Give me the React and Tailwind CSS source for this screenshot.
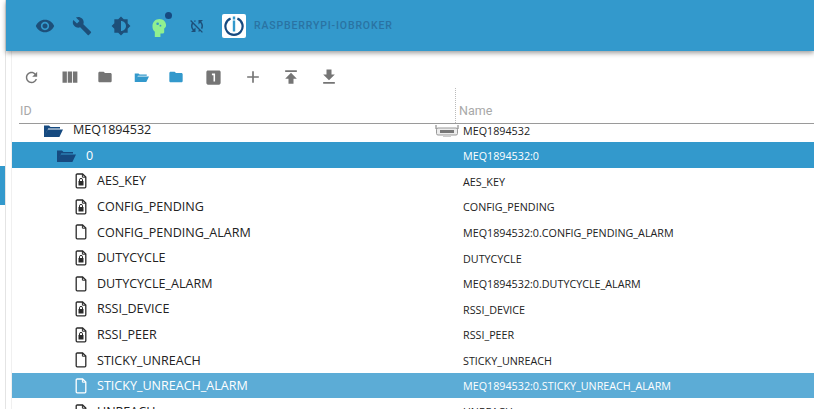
const D = "#1d4f79";
const G = "#757575";
const B = "#3399cc";

function Mi({ d, size = 24, color, className = "" }) {
  return (
    <svg width={size} height={size} viewBox="0 0 24 24" fill={color} className={"shrink-0 " + className}>
      <path d={d} />
    </svg>
  );
}

const P = {
  eye: "M12 4.5C7 4.5 2.73 7.61 1 12c1.73 4.39 6 7.5 11 7.5s9.27-3.11 11-7.5c-1.73-4.39-6-7.5-11-7.5zM12 17c-2.76 0-5-2.24-5-5s2.24-5 5-5 5 2.24 5 5-2.24 5-5 5zm0-8c-1.66 0-3 1.34-3 3s1.34 3 3 3 3-1.34 3-3-1.34-3-3-3z",
  wrench: "M22.7 19l-9.1-9.1c.9-2.3.4-5-1.5-6.9-2-2-5-2.4-7.4-1.3L9 6 6 9 1.6 4.7C.4 7.1.9 10.1 2.9 12.1c1.9 1.9 4.6 2.4 6.9 1.5l9.1 9.1c.4.4 1 .4 1.4 0l2.3-2.3c.5-.4.5-1.1.1-1.4z",
  bright: "M20 8.69V4h-4.69L12 .69 8.69 4H4v4.69L.69 12 4 15.31V20h4.69L12 23.31 15.31 20H20v-4.69L23.31 12 20 8.69zM12 18V6c3.31 0 6 2.69 6 6s-2.69 6-6 6z",
  sync: "M10 6.35V4.26c-.8.21-1.55.54-2.23.96l1.46 1.46c.25-.12.5-.24.77-.33zm-7.14-.94l2.36 2.36C4.45 8.99 4 10.44 4 12c0 2.21.91 4.2 2.36 5.64L4 20h6v-6l-2.24 2.24C6.68 15.15 6 13.66 6 12c0-1 .25-1.94.68-2.77l8.08 8.08c-.25.13-.5.25-.77.34v2.09c.8-.21 1.55-.54 2.23-.96l2.36 2.36 1.27-1.27L4.14 4.14 2.86 5.41zM20 4h-6v6l2.24-2.24C17.32 8.85 18 10.34 18 12c0 1-.25 1.94-.68 2.77l1.46 1.46C19.55 15.01 20 13.56 20 12c0-2.21-.91-4.2-2.36-5.64L20 4z",
  refresh: "M17.65 6.35C16.2 4.9 14.21 4 12 4c-4.42 0-7.99 3.58-7.99 8s3.57 8 7.99 8c3.73 0 6.84-2.55 7.73-6h-2.08c-.82 2.33-3.04 4-5.65 4-3.31 0-6-2.69-6-6s2.69-6 6-6c1.66 0 3.14.69 4.22 1.78L13 11h7V4l-2.35 2.35z",
  cols: "M10 18h5V5h-5v13zm-6 0h5V5H4v13zM16 5v13h5V5h-5z",
  folder: "M10 4H4c-1.1 0-1.99.9-1.99 2L2 18c0 1.1.9 2 2 2h16c1.1 0 2-.9 2-2V8c0-1.1-.9-2-2-2h-8l-2-2z",
  one: "M19 3H5c-1.1 0-2 .9-2 2v14c0 1.1.9 2 2 2h14c1.1 0 2-.9 2-2V5c0-1.1-.9-2-2-2zm-5 14h-2V9h-2V7h4v10z",
  plus: "M19 13h-6v6h-2v-6H5v-2h6V5h2v6h6v2z",
  up: "M5 4v2h14V4H5zm0 10h4v6h6v-6h4l-7-7-7 7z",
  down: "M19 9h-4V3H9v6H5l7 7 7-7zM5 18v2h14v-2H5z",
};

function FolderOpen({ color, w = 20, h = 14 }) {
  return (
    <svg width={w} height={h} viewBox="0 0 20 14" fill={color} className="shrink-0">
      <path d="M1 13V1.5h5l1.5 1.5H17v1.6H5.2L1.8 11.4 4.8 5.6H20L16.4 13z" />
    </svg>
  );
}

function FileIcon({ locked, color }) {
  return (
    <svg width="12" height="16" viewBox="0 0 12 16" className="shrink-0 -mt-[1px]">
      <path d="M1.2 3v10.8c0 .6.4 1 1 1h7.6c.6 0 1-.4 1-1V4L7.6 1H2.2c-.6 0-1 .4-1 1z" fill="none" stroke={color} strokeWidth="1.3" />
      <path d="M7.4 1v3.2h3.4" fill="none" stroke={color} strokeWidth="1" />
      {locked && <rect x="3.5" y="8" width="5" height="4.6" rx=".4" fill={color} />}
      {locked && <path d="M4.5 8.2V6.9a1.5 1.5 0 013 0v1.3" fill="none" stroke={color} strokeWidth="1" />}
    </svg>
  );
}

function Device() {
  return (
    <svg width="24" height="14" viewBox="0 0 24 14" className="shrink-0">
      <path d="M1 1v4h22V1" fill="none" stroke="#777" strokeWidth="1" />
      <rect x="1.5" y="4" width="21" height="7" rx="1.5" fill="#ececec" stroke="#999" />
      <rect x="5" y="6" width="14" height="3" fill="#777" />
      <rect x="8" y="11" width="8" height="2" fill="#ccc" />
    </svg>
  );
}

const rows = [
  { id: "AES_KEY", name: "AES_KEY", locked: true },
  { id: "CONFIG_PENDING", name: "CONFIG_PENDING", locked: true },
  { id: "CONFIG_PENDING_ALARM", name: "MEQ1894532:0.CONFIG_PENDING_ALARM" },
  { id: "DUTYCYCLE", name: "DUTYCYCLE", locked: true },
  { id: "DUTYCYCLE_ALARM", name: "MEQ1894532:0.DUTYCYCLE_ALARM" },
  { id: "RSSI_DEVICE", name: "RSSI_DEVICE", locked: true },
  { id: "RSSI_PEER", name: "RSSI_PEER", locked: true },
  { id: "STICKY_UNREACH", name: "STICKY_UNREACH" },
  { id: "STICKY_UNREACH_ALARM", name: "MEQ1894532:0.STICKY_UNREACH_ALARM", hl: true },
  { id: "UNREACH", name: "UNREACH", locked: true },
];

export default function App() {
  return (
    <div className="w-[814px] h-[409px] overflow-hidden bg-white flex font-['Open_Sans',sans-serif] text-[#222]">
      <div className="w-[6px] shrink-0 border-r border-[#e4e4e4] pt-[166px]">
        <div className="w-[5px] h-[39px] bg-[#3399cc]" />
      </div>
      <div className="flex-1 min-w-0 flex flex-col">
        <header className="relative z-10 h-[51px] shrink-0 bg-[#3399cc] shadow-[0_2px_5px_rgba(0,0,0,0.4)] flex items-center pl-[28.5px] pt-[1px]">
          <Mi d={P.eye} size={20} color={D} />
          <Mi d={P.wrench} size={20} color={D} className="ml-[17.5px]" />
          <Mi d={P.bright} size={20} color={D} className="ml-[19px]" />
          <div className="relative ml-[21px] w-[20px] h-[24px]">
            <svg width="15" height="19" viewBox="0 0 16 20" className="mt-[4px]">
              <path d="M3 20v-5.5C1 13 .5 11 .5 8.5.5 4 3.8 1 8 1c4 0 7 3 7 6.5 0 1.5-.5 2.5-2 3.5v4c0 1-1 1.5-2 1.5H9V20z" fill="#90f090" />
              <circle cx="6" cy="6" r="1.4" fill="#3399cc" />
              <circle cx="9" cy="8" r="1" fill="#3399cc" />
            </svg>
            <div className="absolute left-[13px] -top-[2px] w-[7px] h-[7px] rounded-full bg-[#164a80]" />
          </div>
          <Mi d={P.sync} size={18} color={D} className="ml-[16px]" />
          <div className="ml-[16px] w-[24px] h-[24px] bg-white rounded-[2px] flex items-center justify-center shrink-0 -mt-[1px]">
            <svg width="20" height="20" viewBox="0 0 20 20">
              <path d="M6.6 2.4a8.6 8.6 0 106.8 0" fill="none" stroke="#164a80" strokeWidth="2.2" />
              <rect x="8.8" y="0.5" width="2.4" height="3" fill="#3399cc" />
              <rect x="8.8" y="4.5" width="2.4" height="11" fill="#3399cc" />
            </svg>
          </div>
          <span className="ml-[8px] font-['Roboto',sans-serif] font-medium text-[10.5px] tracking-[0.85px] text-[#2a73a3]">RASPBERRYPI-IOBROKER</span>
        </header>

        <main className="flex-1 min-h-0 flex flex-col pl-[5px]">
          <div className="flex-1 min-h-0 flex flex-col border-l border-[#f0f0f0]">
            <div className="h-[50px] shrink-0 flex items-center pl-[11px] pt-[2px]">
              <Mi d={P.refresh} size={17} color={G} />
              <Mi d={P.cols} size={21} color={G} className="ml-[19px]" />
              <Mi d={P.folder} size={16} color={G} className="ml-[17px]" />
              <div className="ml-[21px]"><FolderOpen color={B} w={15} h={11} /></div>
              <Mi d={P.folder} size={16} color={B} className="ml-[19px]" />
              <Mi d={P.one} size={19} color={G} className="ml-[20px]" />
              <Mi d={P.plus} size={20} color={G} className="ml-[20px]" />
              <Mi d={P.up} size={20} color={G} className="ml-[18px]" />
              <Mi d={P.down} size={20} color={G} className="ml-[18px]" />
            </div>

            <div className="h-[23px] shrink-0 ml-[7px] flex border-b border-[#9a9a9a] font-['Roboto',sans-serif] text-[12.5px] text-[#a8a8a8]">
              <div className="w-[436px] pl-[1px] pt-[1px] leading-[18px]">ID</div>
              <div className="pl-[3px] pt-[1px] leading-[18px] border-l border-dotted border-[#bbb] -mt-[13px] h-[35px] flex items-end pb-[3px]">Name</div>
            </div>

            <div className="flex-1 min-h-0 overflow-hidden text-[12.55px]">
              <div className="-mt-[7.2px]">
                <Row
                  id="MEQ1894532"
                  name="MEQ1894532"
                  pad={31}
                  icon={<FolderOpen color="#164a80" />}
                  gap={10}
                  extra={<Device />}
                />
                <Row
                  id="0"
                  name="MEQ1894532:0"
                  pad={44}
                  bg="bg-[#3399cc]"
                  light
                  icon={<FolderOpen color="#164a80" />}
                  gap={10}
                />
                {rows.map((r) => (
                  <Row
                    key={r.id}
                    id={r.id}
                    name={r.name}
                    pad={63}
                    gap={10}
                    bg={r.hl ? "bg-[#5cacd6]" : ""}
                    light={r.hl}
                    icon={<FileIcon locked={r.locked} color={r.hl ? "#ffffff" : "#2a2a2a"} />}
                  />
                ))}
              </div>
            </div>
          </div>
        </main>
      </div>
    </div>
  );
}

function Row({ id, name, pad, icon, gap, bg = "", light, extra }) {
  return (
    <div className={"h-[25.6px] flex items-center pt-[2px] " + bg + (light ? " text-white" : "")}>
      <div className="w-[423px] shrink-0 flex items-center" style={{ paddingLeft: pad, gap }}>
        {icon}
        <span className="whitespace-nowrap">{id}</span>
      </div>
      <div className="w-[24px] shrink-0 flex items-center">{extra}</div>
      <div className="pl-[4px] text-[10.75px] whitespace-nowrap">{name}</div>
    </div>
  );
}
